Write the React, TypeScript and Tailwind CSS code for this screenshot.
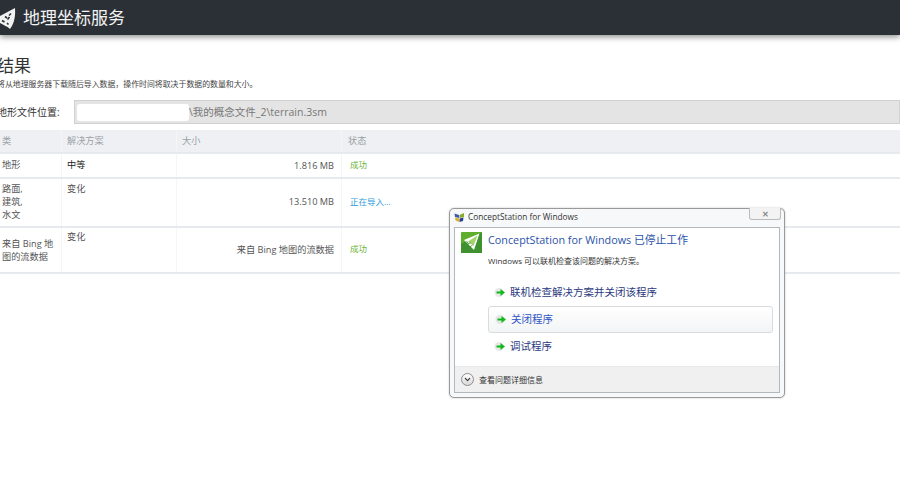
import type { ReactNode } from 'react'
import { ChevronDown } from 'lucide-react'

const cjk = "font-['Open_Sans','Noto_Sans_CJK_SC',sans-serif]"
const dlgFont = "font-['Noto_Sans_CJK_SC','Liberation_Sans',sans-serif]"

function GreenArrow() {
  return (
    <svg width="13" height="13" viewBox="0 0 13 13" className="shrink-0">
      <circle cx="5" cy="6.5" r="4.5" fill="#d8d8d8" opacity="0.6" />
      <path d="M2.5 5.4h4V3l4.5 3.5L6.5 10V7.6h-4z" fill="#12b81c" />
    </svg>
  )
}

function TableRow({
  cols,
  className,
}: {
  cols: ReactNode[]
  className: string
}) {
  return (
    <div className={`grid grid-cols-[62px_115px_165px_1fr] border-b-2 border-[#e6e9ed] text-[9.2px] leading-[13px] text-[#555] ${className}`}>
      {cols.map((c, i) => (
        <div key={i} className="border-r border-[#f4f5f6] last:border-r-0">
          {c}
        </div>
      ))}
    </div>
  )
}

function Dialog() {
  return (
    <div className={`absolute left-[449px] top-[208px] h-[190px] w-[336px] rounded-[5px] border border-[#9a9a9a] bg-[#f7f8f9] shadow-[0_0_2px_rgba(0,0,0,0.25)] ${dlgFont}`}>
      <div className="flex h-[15px] items-center pl-[4px] pt-[1px]">
        <svg width="11" height="11" viewBox="0 0 11 11" className="shrink-0">
          <path d="M0.5 1.5 5 3v3L1 5z" fill="#3b5bb5" />
          <path d="M5.5 3 10 1v4L5.5 6z" fill="#8aa92c" />
          <path d="M1 5.5 5 6.5v3.5L1.5 8.5z" fill="#d8b32a" />
          <path d="M5.5 6.5 9.5 5.5 9 9l-3.5 1z" fill="#2a3f8f" />
        </svg>
        <span className="ml-[3px] font-['Open_Sans',sans-serif] text-[8.3px] leading-none text-[#333]">ConceptStation for Windows</span>
      </div>
      <div className="absolute right-[3px] top-[-1px] flex h-[12px] w-[32px] items-center justify-center rounded-b-[3px] border border-t-0 border-[#bbb] bg-[#f3f3f3] text-[8px] font-bold leading-none text-[#8a8a8a]">
        ✕
      </div>
      <div className="mx-[4px] mt-[3px] flex h-[166px] flex-col border border-[#b5b8bb] bg-white">
        <div className="flex pl-[6px] pt-[4px]">
          <svg width="21" height="21" viewBox="0 0 21 21" className="shrink-0">
            <rect width="21" height="21" rx="1" fill="#5fae2e" />
            <path d="M0 21V12L21 0v21z" fill="#3f9130" />
            <path d="M3 8 18.5 1.5 13 18z" fill="#ffffff" />
            <path d="M7 9.5 16.5 3.5 12.5 14z" fill="#a5d36a" />
            <path d="M7 12l3-1.5M9 15l2.5-2M5.5 9l2 3" stroke="#3f9130" strokeWidth="0.8" />
          </svg>
          <div className="ml-[6px]">
            <div className="font-['Open_Sans','Noto_Sans_CJK_SC',sans-serif] text-[10.8px] leading-[15px] text-[#2a52a8]">ConceptStation for Windows 已停止工作</div>
            <div className="mt-[8px] font-['Open_Sans','Noto_Sans_CJK_SC',sans-serif] text-[8px] leading-[12px] text-[#333]">Windows 可以联机检查该问题的解决方案。</div>
          </div>
        </div>
        <div className="ml-[33px] mr-[6px] mt-[12px] flex h-[27px] items-center pl-[6px]">
          <GreenArrow />
          <span className="ml-[3px] text-[10.5px] leading-none text-[#2b3a80]">联机检查解决方案并关闭该程序</span>
        </div>
        <div className="ml-[33px] mr-[6px] flex h-[27px] items-center rounded-[3px] border border-[#d8dcdf] bg-gradient-to-b from-white to-[#f3f4f5] pl-[6px]">
          <GreenArrow />
          <span className="ml-[3px] text-[10.5px] leading-none text-[#2f55c4]">关闭程序</span>
        </div>
        <div className="ml-[33px] mr-[6px] flex h-[27px] items-center pl-[6px]">
          <GreenArrow />
          <span className="ml-[3px] text-[10.5px] leading-none text-[#2b3a80]">调试程序</span>
        </div>
        <div className="mt-auto flex h-[26px] items-center border-t border-[#e8e8e8] bg-[#f0f0f0] pl-[6px]">
          <div className="flex h-[13px] w-[13px] items-center justify-center rounded-full border border-[#8d8d8d] bg-gradient-to-b from-white to-[#d8d8d8]">
            <ChevronDown size={9} strokeWidth={3} className="text-[#333]" />
          </div>
          <span className="ml-[5px] text-[8px] leading-none text-[#333]">查看问题详细信息</span>
        </div>
      </div>
    </div>
  )
}

export default function App() {
  return (
    <div className={`relative h-[500px] w-[900px] overflow-hidden bg-white ${cjk}`}>
      <header className="flex h-[35px] items-center bg-[#2b3036] shadow-[0_2px_6px_rgba(0,0,0,0.45)]">
        <svg width="16" height="35" viewBox="0 0 16 35" className="shrink-0">
          <path d="M15 8C15.5 14 15 23 10 29 7 26 3 25 0 23V16z" fill="#f2f2f2" />
          <path d="M11 13.5 9 15.5M9.5 17l-2 2.5M5 16.5l2 1.5M2 20.5l2.5 1.5M7 23l1.5 1.5" stroke="#2b3036" strokeWidth="1.6" />
        </svg>
        <span className="ml-[7px] text-[17px] leading-none text-[#f3f3f3]">地理坐标服务</span>
      </header>

      <main className="-ml-[3px] pt-[19px]">
        <h1 className="text-[17px] leading-[23px] text-[#333]">结果</h1>
        <p className="mt-[1px] text-[7.9px] leading-[12px] text-[#444]">将从地理服务器下载随后导入数据，操作时间将取决于数据的数量和大小。</p>

        <div className="mt-[10px] flex h-[24px] items-center">
          <label className="w-[77px] shrink-0 text-[10px] leading-none text-[#333]">地形文件位置:</label>
          <div className="flex h-[24px] w-full items-center border border-[#cfd1d3] bg-[#e4e4e4] pl-[2px]">
            <div className="h-[17px] w-[112px] rounded-[3px] bg-white" />
            <span className="text-[10.5px] leading-none text-[#777]">\我的概念文件_2\terrain.3sm</span>
          </div>
        </div>

        <div className="ml-[3px] mt-[6px]">
          <TableRow
            className="h-[24px] items-stretch bg-[#eef0f3] !text-[#9aa0a6]"
            cols={[
              <div className="pl-[2px] pt-[4px]">类</div>,
              <div className="pl-[5px] pt-[4px]">解决方案</div>,
              <div className="pl-[5px] pt-[4px]">大小</div>,
              <div className="pl-[6px] pt-[4px]">状态</div>,
            ]}
          />
          <TableRow
            className="h-[25px]"
            cols={[
              <div className="pl-[2px] pt-[4px]">地形</div>,
              <div className="pl-[5px] pt-[4px] text-[#222]">中等</div>,
              <div className="pr-[7px] pt-[5px] text-right">1.816 MB</div>,
              <div className="pl-[8px] pt-[4px] text-[8.5px] text-[#6ab536]">成功</div>,
            ]}
          />
          <TableRow
            className="h-[49px]"
            cols={[
              <div className="pl-[2px] pt-[3px]">路面,<br />建筑,<br />水文</div>,
              <div className="pl-[5px] pt-[3px]">变化</div>,
              <div className="pr-[7px] pt-[16px] text-right">13.510 MB</div>,
              <div className="pl-[8px] pt-[16px] text-[8.5px] text-[#2a9ae0]">正在导入...</div>,
            ]}
          />
          <TableRow
            className="h-[46px]"
            cols={[
              <div className="pl-[2px] pt-[9px]">来自 Bing 地<br />图的流数据</div>,
              <div className="pl-[5px] pt-[2px]">变化</div>,
              <div className="pr-[7px] pt-[15px] text-right">来自 Bing 地图的流数据</div>,
              <div className="pl-[8px] pt-[14px] text-[8.5px] text-[#6ab536]">成功</div>,
            ]}
          />
        </div>
      </main>

      <Dialog />
    </div>
  )
}
